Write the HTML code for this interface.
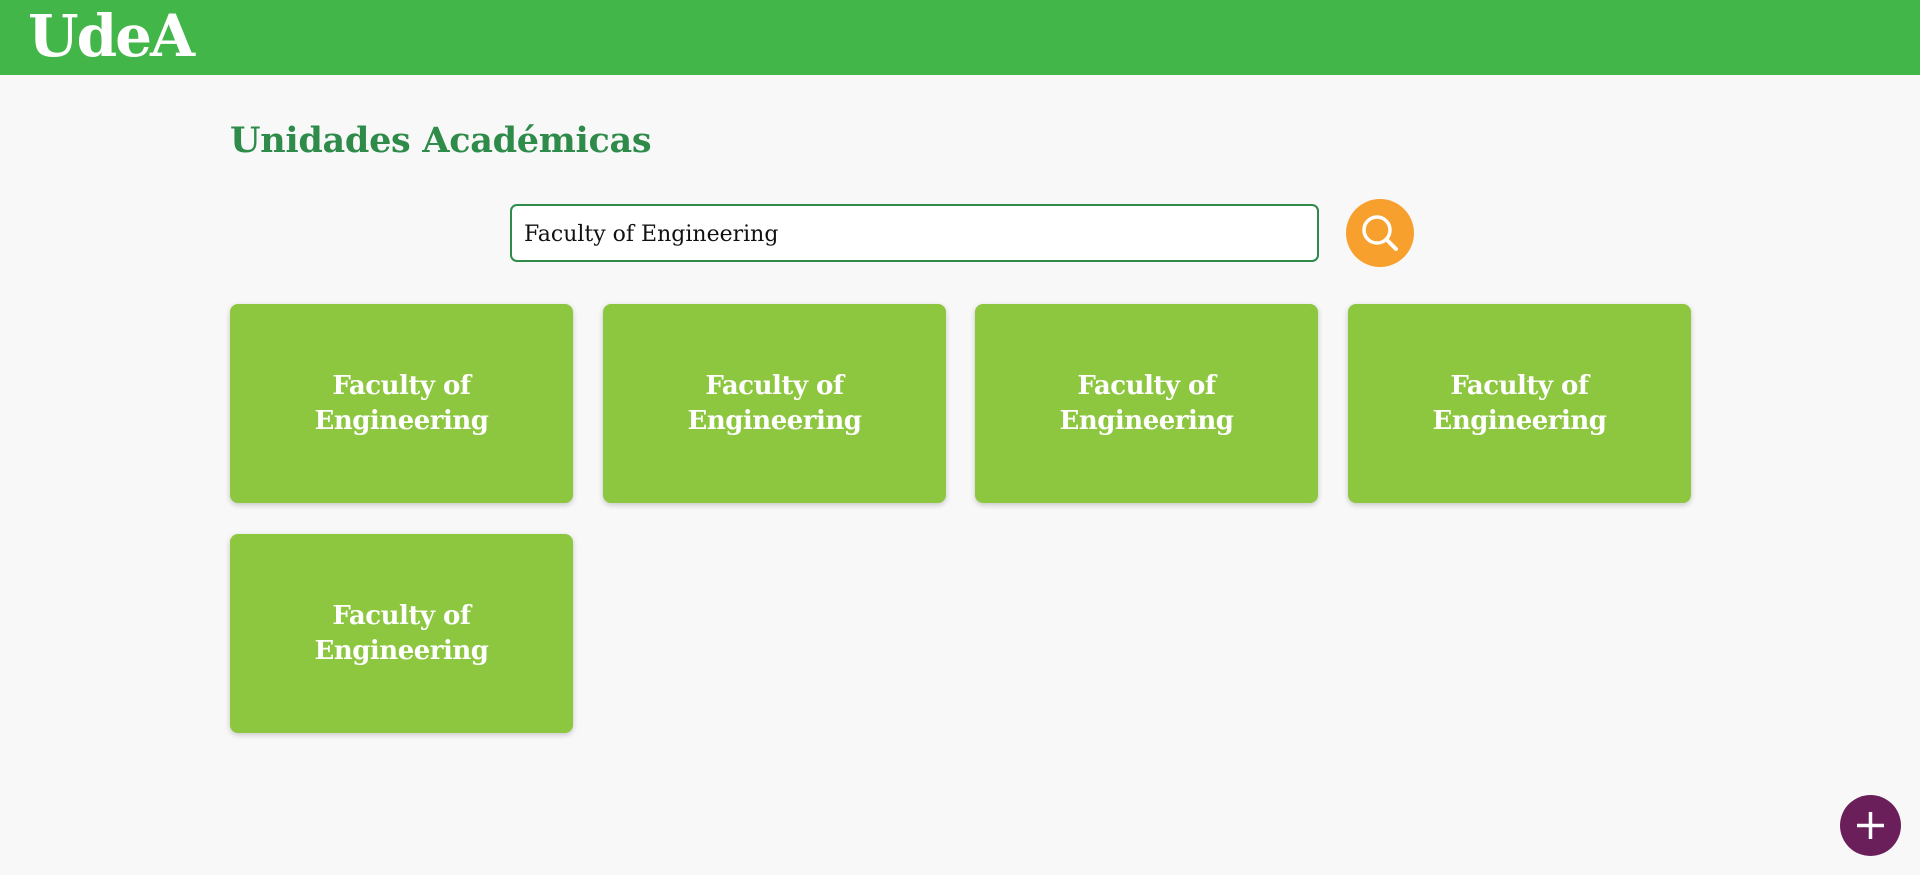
<!DOCTYPE html>
<html><head><meta charset="utf-8"><style>
html,body{margin:0;padding:0;width:1920px;height:875px;overflow:hidden;background:#f8f8f8;font-family:"DejaVu Serif","Liberation Serif",serif;}
.hdr{position:absolute;left:0;top:0;width:1920px;height:75px;background:#43b649;}
.logo{position:absolute;left:28px;top:2px;color:#fff;font-weight:bold;font-size:58px;letter-spacing:-2px;}
h1{position:absolute;left:230px;top:120px;margin:0;font-size:35px;color:#2e8b4a;font-weight:bold;letter-spacing:-0.3px;}
.inp{position:absolute;left:510px;top:204px;width:809px;height:58px;border:2.5px solid #2e8b4a;border-radius:7px;background:#fff;box-sizing:border-box;}
.inp span{position:absolute;left:12px;top:16px;font-size:22px;color:#111;}
.btn{position:absolute;left:1346px;top:199px;width:68px;height:68px;border-radius:50%;background:#f7a02d;}
.card{position:absolute;width:343px;height:199px;background:#8dc63f;border-radius:8px;box-shadow:0 2px 6px rgba(0,0,0,.2);color:#fff;font-weight:bold;font-size:26px;text-align:center;display:flex;align-items:center;justify-content:center;line-height:35px;letter-spacing:-0.5px;}
.fab{position:absolute;left:1840px;top:795px;width:61px;height:61px;border-radius:50%;background:#6b1f5a;}
</style></head><body>
<div class="hdr"><div class="logo">UdeA</div></div>
<h1>Unidades Académicas</h1>
<div class="inp"><span>Faculty of Engineering</span></div>
<div class="btn"><svg width="68" height="68" viewBox="0 0 68 68"><circle cx="31" cy="31" r="13" fill="none" stroke="#fff" stroke-width="3.5"/><line x1="40.5" y1="40.5" x2="50" y2="50" stroke="#fff" stroke-width="4" stroke-linecap="round"/></svg></div>
<div class="card" style="left:230px;top:304px">Faculty of<br>Engineering</div>
<div class="card" style="left:603px;top:304px">Faculty of<br>Engineering</div>
<div class="card" style="left:975px;top:304px">Faculty of<br>Engineering</div>
<div class="card" style="left:1348px;top:304px">Faculty of<br>Engineering</div>
<div class="card" style="left:230px;top:534px">Faculty of<br>Engineering</div>
<div class="fab"><svg width="61" height="61" viewBox="0 0 61 61"><path d="M30.5 17v27M17 30.5h27" stroke="#fff" stroke-width="3.5"/></svg></div>
</body></html>
